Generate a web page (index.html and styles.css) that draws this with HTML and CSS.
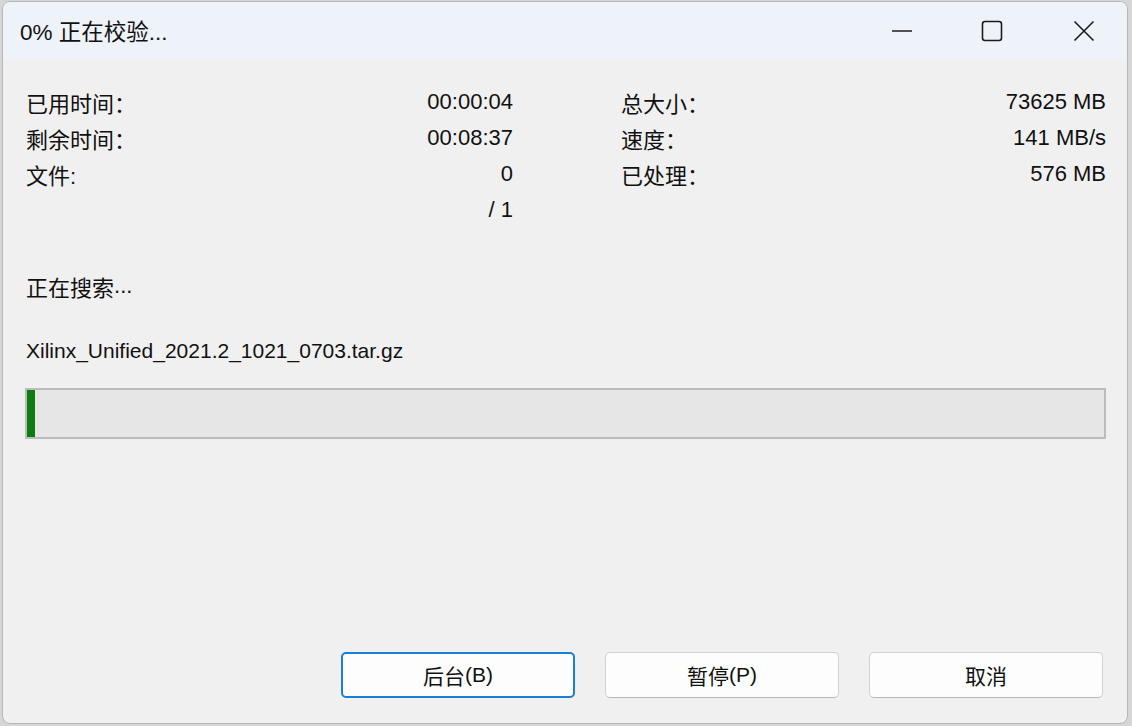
FILE: index.html
```html
<!DOCTYPE html>
<html lang="zh">
<head>
<meta charset="utf-8">
<title>0% 正在校验...</title>
<link rel="stylesheet" href="styles.css">
</head>
<body>
<div class="window">
  <div class="titlebar">
    <div class="title">0% 正在校验...</div>
    <div class="caption-buttons">
      <div class="cap-btn min">
        <svg width="22" height="22" viewBox="0 0 22 22"><line x1="1" y1="11" x2="21" y2="11" stroke="#1b1b1b" stroke-width="1.6"/></svg>
      </div>
      <div class="cap-btn max">
        <svg width="22" height="22" viewBox="0 0 22 22"><rect x="1.5" y="1.5" width="19" height="19" rx="2.5" fill="none" stroke="#1b1b1b" stroke-width="1.6"/></svg>
      </div>
      <div class="cap-btn close">
        <svg width="22" height="22" viewBox="0 0 22 22"><path d="M1.5 1.5 L20.5 20.5 M20.5 1.5 L1.5 20.5" stroke="#1b1b1b" stroke-width="1.6" fill="none"/></svg>
      </div>
    </div>
  </div>
  <div class="content">
    <div class="stats">
      <div class="group">
        <div class="row"><span>已用时间：</span><span>00:00:04</span></div>
        <div class="row"><span>剩余时间：</span><span>00:08:37</span></div>
        <div class="row"><span>文件<span class="lat">:</span></span><span>0</span></div>
        <div class="row"><span></span><span>/ 1</span></div>
      </div>
      <div class="group">
        <div class="row"><span>总大小：</span><span>73625 MB</span></div>
        <div class="row"><span>速度：</span><span>141 MB/s</span></div>
        <div class="row"><span>已处理：</span><span>576 MB</span></div>
      </div>
    </div>
    <div class="status">正在搜索<span class="lat">...</span></div>
    <div class="filename">Xilinx_Unified_2021.2_1021_0703.tar.gz</div>
    <div class="progress"><div class="fill" style="width: 8px"></div></div>
    <div class="spacer"></div>
    <div class="buttons">
      <button class="btn default">后台<span class="lat">(B)</span></button>
      <button class="btn">暂停<span class="lat">(P)</span></button>
      <button class="btn">取消</button>
    </div>
  </div>
</div>
</body>
</html>
```

FILE: styles.css
```css
html, body {
  margin: 0;
  padding: 0;
}
body {
  background: #d6d6d6;
  width: 1132px;
  height: 726px;
  overflow: hidden;
  font-family: "Liberation Sans", "Noto Sans CJK SC", sans-serif;
  color: #111;
}
.window {
  margin: 1px 0 0 2px;
  width: 1124px;
  height: 721px;
  border: 1px solid #b8b8b8;
  border-radius: 8px;
  background: #f0f0f0;
  overflow: hidden;
  display: flex;
  flex-direction: column;
}
.titlebar {
  height: 58px;
  background: #eef3f9;
  display: flex;
  align-items: center;
  justify-content: space-between;
  flex-shrink: 0;
}
.title {
  padding-left: 17px;
  font-size: 22.5px;
  padding-bottom: 2px;
}
.caption-buttons {
  display: flex;
  height: 100%;
}
.cap-btn {
  display: flex;
  align-items: center;
  justify-content: center;
}
.cap-btn.min { width: 82px; }
.cap-btn.max { width: 98px; }
.cap-btn.close { width: 86px; }
.content {
  flex: 1;
  display: flex;
  flex-direction: column;
  padding: 24px 24px 25px 22px;
  font-size: 22px;
}
.lat {
  font-family: "Liberation Sans", sans-serif;
}
.stats {
  display: grid;
  grid-template-columns: 487px 485px;
  column-gap: 108px;
  padding-left: 1px;
}
.group {
  display: flex;
  flex-direction: column;
}
.row {
  height: 36px;
  display: flex;
  align-items: center;
  justify-content: space-between;
}
.status {
  margin-top: 40px;
  height: 36px;
  display: flex;
  align-items: center;
  padding-left: 1px;
}
.filename {
  margin-top: 29px;
  height: 36px;
  display: flex;
  align-items: center;
  font-size: 21px;
  padding-left: 1px;
}
.progress {
  margin-top: 19px;
  width: 1077px;
  height: 47px;
  border: 2px solid #bcbcbc;
  background: #e6e6e6;
  display: flex;
}
.fill {
  background: #0c7d12;
  height: 100%;
}
.spacer {
  flex: 1;
}
.buttons {
  display: flex;
  justify-content: flex-end;
  gap: 30px;
}
.btn {
  width: 234px;
  height: 46px;
  background: #fdfdfd;
  border: 1px solid #d2d2d2;
  border-bottom-color: #b8b8b8;
  border-radius: 5px;
  font-family: "Liberation Sans", "Noto Sans CJK SC", sans-serif;
  font-size: 21px;
  color: #111;
  padding: 0;
  display: flex;
  align-items: center;
  justify-content: center;
}
.btn.default {
  border: 2px solid #1a7fd6;
}
```
